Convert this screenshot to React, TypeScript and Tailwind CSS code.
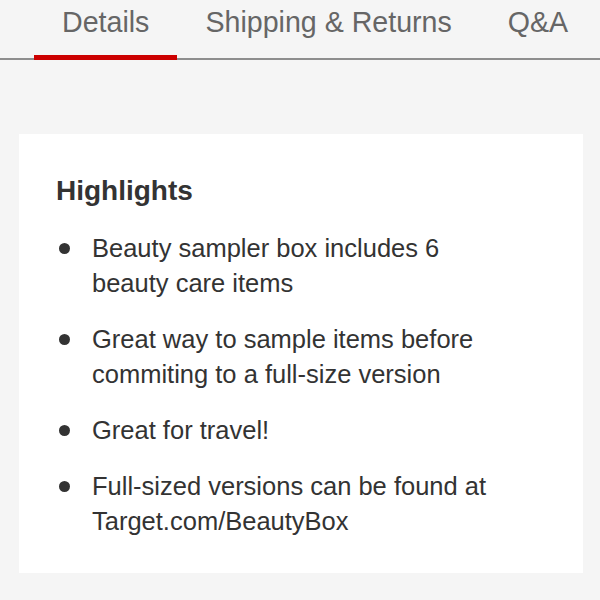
const TABS = ['Details', 'Shipping & Returns', 'Q&A'];

const HIGHLIGHTS = [
  'Beauty sampler box includes 6 beauty care items',
  'Great way to sample items before commiting to a full-size version',
  'Great for travel!',
  'Full-sized versions can be found at Target.com/BeautyBox',
];

export default function App() {
  return (
    <div
      className="w-[600px] h-[600px] overflow-hidden bg-[#f5f5f5] text-[#333]"
      style={{ fontFamily: '"Liberation Sans", Arial, sans-serif' }}
    >
      {/* Tabs */}
      <div className="flex pl-[34px] border-b-2 border-[#8e8e8e] h-[60px]">
        {TABS.map((t, i) => (
          <div
            key={t}
            className={`px-[28px] pt-[5px] text-[28.6px] leading-[34px] text-[#666] whitespace-nowrap ${
              i === 0 ? 'border-b-[5px] border-[#cc0000] -mb-[2px]' : ''
            }`}
          >
            {t}
          </div>
        ))}
      </div>

      {/* Highlights card */}
      <div className="ml-[19px] mr-[17px] mt-[74px] bg-white h-[439px] pl-[37px] pr-[20px] pt-[40px]">
        <h2 className="text-[28px] font-bold leading-[34px]">Highlights</h2>
        <ul className="mt-[23px] flex flex-col gap-[21px]">
          {HIGHLIGHTS.map((h) => (
            <li key={h} className="flex text-[25.5px] leading-[35px]">
              <span className="w-[36px] shrink-0 flex items-start pt-[12px] pl-[3px]">
                <span className="w-[11px] h-[11px] rounded-full bg-[#333]" />
              </span>
              <span className="max-w-[400px]">{h}</span>
            </li>
          ))}
        </ul>
      </div>
    </div>
  );
}
